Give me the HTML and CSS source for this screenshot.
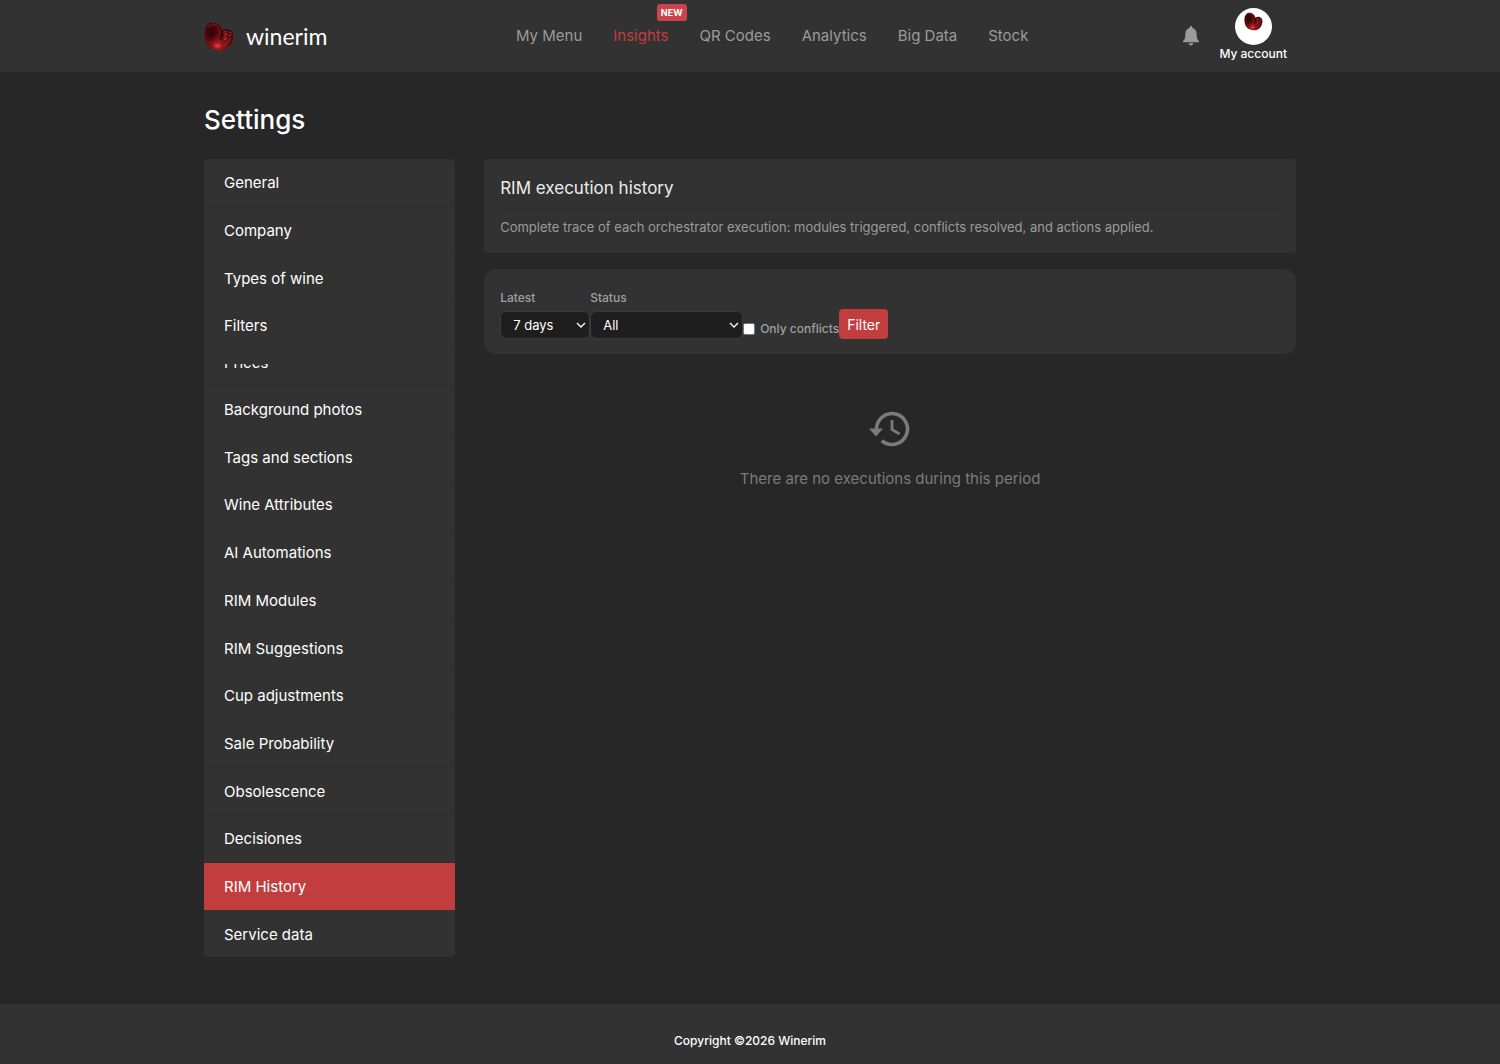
FILE: index.html
```html
<!DOCTYPE html>
<html lang="en">
<head>
    <meta charset="utf-8">
    <meta name="viewport" content="width=device-width, initial-scale=1">
    <title>Winerim - Settings</title>
    <link rel="stylesheet" href="styles.css">
</head>
<body>

<!-- shared drawings -->
<svg class="defs" aria-hidden="true">
    <defs>
        <radialGradient id="shine" cx="46%" cy="82%" r="70%">
            <stop offset="0" stop-color="#c0282c"/>
            <stop offset="0.25" stop-color="#8f1519"/>
            <stop offset="0.6" stop-color="#5e0a0d"/>
            <stop offset="1" stop-color="#420608"/>
        </radialGradient>
        <radialGradient id="lobe" cx="50%" cy="50%" r="50%">
            <stop offset="0" stop-color="#1f0203" stop-opacity=".8"/>
            <stop offset="1" stop-color="#1f0203" stop-opacity="0"/>
        </radialGradient>
    </defs>
    <symbol id="bean" viewBox="0 0 30 29">
        <path d="M8 .5C13 .3 17 4 18 8.500c1.500-1.500 4-2 6.500-1.300 3.500 1 5 3.800 4.600 7.300C28.500 23 23.500 28.500 16 28.500 6.500 28.500 1 22.500.7 13.500.5 6 3 .8 8 .5z" fill="url(#shine)"/>
        <ellipse cx="8" cy="12" rx="7" ry="9" fill="url(#lobe)"/>
        <path d="M3.500 5C6 2 10.500 1.500 13.500 4.500c2 2.500 2.500 6 2 10" fill="none" stroke="#8e1418" stroke-width="1.800" opacity=".6"/>
        <path d="M18 9c.3 3.500-.2 6-1.500 8.500" fill="none" stroke="#250305" stroke-width="1.500"/>
        <path d="M19.500 10.500l3.500-1.500M25 10l2.500 1M20 15l2.500-1.500M24.500 14l3-1.500" fill="none" stroke="#a82a31" stroke-width="1.100"/>
        <path d="M20.500 12.500l3-1.200M20 17.500l3.500-1.500" fill="none" stroke="#d5505a" stroke-width=".9"/>
        <path d="M10 23.500c1-2 5.500-2 7 0-.5 3-5.500 3.300-7 0z" fill="#dd3c3e" opacity=".7"/>
        <path d="M20 24c3-2 5-5 6-8" fill="none" stroke="#a32226" stroke-width="1.400" opacity=".7"/>
    </symbol>
</svg>

<header class="header">
    <div class="container header-inner">
        <a class="logo" href="#">
            <svg class="logo-mark" aria-hidden="true"><use href="#bean"/></svg>
            <span class="logo-text">winerim</span>
        </a>
        <nav class="nav" aria-label="Main">
            <a href="#">My Menu</a>
            <a href="#" class="current">Insights<span class="badge">NEW</span></a>
            <a href="#">QR Codes</a>
            <a href="#">Analytics</a>
            <a href="#">Big Data</a>
            <a href="#">Stock</a>
        </nav>
        <div class="user">
            <button class="bell" type="button" aria-label="Notifications">
                <svg viewBox="0 0 16 20" width="16" height="20" aria-hidden="true">
                    <path d="M8 0c.8 0 1.400.6 1.400 1.300v.8c2.700.6 4.200 2.900 4.200 5.800 0 4 .7 5.600 2.400 7.100v1.200H0V15c1.700-1.500 2.400-3.100 2.400-7.100 0-2.900 1.500-5.200 4.200-5.800v-.8C6.600.6 7.200 0 8 0zM5.700 17.300h4.600C10.200 18.600 9.200 19.500 8 19.500s-2.200-.9-2.300-2.200z"/>
                </svg>
            </button>
            <a class="account" href="#">
                <span class="avatar"><svg aria-hidden="true"><use href="#bean"/></svg></span>
                <span>My account</span>
            </a>
        </div>
    </div>
</header>

<main class="container main">
    <h1>Settings</h1>
    <div class="columns">
        <nav class="side" aria-label="Settings">
            <a href="#">General</a>
            <a href="#">Company</a>
            <a href="#">Types of wine</a>
            <a href="#">Filters</a>
            <a href="#" class="collapsed"><span>Prices</span></a>
            <a href="#">Background photos</a>
            <a href="#">Tags and sections</a>
            <a href="#">Wine Attributes</a>
            <a href="#">AI Automations</a>
            <a href="#">RIM Modules</a>
            <a href="#">RIM Suggestions</a>
            <a href="#">Cup adjustments</a>
            <a href="#">Sale Probability</a>
            <a href="#">Obsolescence</a>
            <a href="#">Decisiones</a>
            <a href="#" class="active">RIM History</a>
            <a href="#">Service data</a>
        </nav>

        <section class="content">
            <div class="card">
                <h2>RIM execution history</h2>
                <p>Complete trace of each orchestrator execution: modules triggered, conflicts resolved, and actions applied.</p>
            </div>

            <form class="filters">
                <div class="field field-days">
                    <label for="days">Latest</label>
                    <div class="select">
                        <select id="days">
                            <option>7 days</option>
                        </select>
                        <svg viewBox="0 0 10 6" aria-hidden="true"><path d="M1 1l4 4 4-4"/></svg>
                    </div>
                </div>
                <div class="field field-status">
                    <label for="status">Status</label>
                    <div class="select">
                        <select id="status">
                            <option>All</option>
                        </select>
                        <svg viewBox="0 0 10 6" aria-hidden="true"><path d="M1 1l4 4 4-4"/></svg>
                    </div>
                </div>
                <label class="check"><input type="checkbox">Only conflicts</label>
                <button class="btn" type="button">Filter</button>
            </form>

            <div class="empty">
                <svg viewBox="0 0 42 36" width="42" height="36" aria-hidden="true">
                    <path class="ring" d="M7.500 18A15.500 15.500 0 1 1 12.800 29.700"/>
                    <path class="head" d="M0 17.500h14l-7 8z"/>
                    <path class="hand" d="M23 9v9.500l7.500 4.500"/>
                </svg>
                <p>There are no executions during this period</p>
            </div>
        </section>
    </div>
</main>

<footer class="footer">Copyright ©2026 Winerim</footer>

</body>
</html>
```
FILE: styles.css
```css
* {
    box-sizing: border-box;
}

body {
    margin: 0;
    min-height: 100vh;
    display: flex;
    flex-direction: column;
    background: #272727;
    color: #fff;
    font-family: Inter, "Liberation Sans", sans-serif;
    font-size: 15px;
    line-height: 24px;
}

a {
    color: inherit;
    text-decoration: none;
}

h1, h2, p {
    margin: 0;
}

.defs {
    position: absolute;
    width: 0;
    height: 0;
}

.container {
    width: 100%;
    max-width: 1124px;
    margin: 0 auto;
    padding: 0 16px;
}

/* header */
.header {
    background: #323232;
}

.header-inner {
    display: flex;
    align-items: center;
    height: 72px;
}

.logo {
    display: flex;
    align-items: center;
    gap: 12px;
    width: 312px;
}

.logo-mark {
    width: 30px;
    height: 29px;
}

.logo-text {
    font-family: Lato, sans-serif;
    font-size: 23px;
}

.nav {
    display: flex;
    gap: 31px;
    color: #9b9b9b;
    white-space: nowrap;
}

.nav a {
    position: relative;
}

.nav .current {
    color: #c43d3d;
}

.badge {
    position: absolute;
    right: -18px;
    top: -20px;
    padding: 0 4px;
    border-radius: 3px;
    background: #cc444b;
    color: #fff;
    font-size: 9px;
    font-weight: 700;
    line-height: 17px;
}

.user {
    display: flex;
    align-items: center;
    gap: 20px;
    margin-left: auto;
    padding-right: 9px;
}

.bell {
    display: flex;
    padding: 0;
    border: 0;
    background: none;
    fill: #9b9b9b;
}

.account {
    display: flex;
    flex-direction: column;
    align-items: center;
    padding-bottom: 2px;
    font-size: 12px;
    font-weight: 500;
    line-height: 18px;
}

.avatar {
    display: flex;
    justify-content: center;
    width: 37px;
    height: 37px;
    padding-top: 4px;
    border-radius: 50%;
    background: #fff;
}

.avatar svg {
    width: 19px;
    height: 19px;
}

/* page */
.main {
    flex: 1;
    display: flex;
    flex-direction: column;
    padding-top: 30px;
    padding-bottom: 47px;
}

h1 {
    margin-bottom: 21px;
    font-size: 26px;
    font-weight: 500;
    line-height: 36px;
}

.columns {
    flex: 1;
    display: flex;
    gap: 29px;
}

.side {
    display: flex;
    flex-direction: column;
    flex: 0 0 23%;
    border-radius: 4px;
    background: #323232;
    overflow: hidden;
}

.side a {
    flex: 1;
    display: flex;
    align-items: center;
    padding: 11px 20px 9px;
    border-bottom: 1px solid #2e2e2e;
}

.side a:last-child {
    border-bottom: 0;
}

.side .active {
    background: #c23e3e;
    border-color: #c23e3e;
}

.side .collapsed {
    flex: 0 0 36px;
}

/* half-closed row, only the bottom of its text is visible */
.side .collapsed span {
    display: flex;
    align-items: flex-end;
    height: 8px;
    line-height: 18px;
    overflow: hidden;
}

.content {
    flex: 1;
    min-width: 0;
}

.card {
    padding: 16px;
    border-radius: 4px;
    background: #323232;
}

.card h2 {
    padding-bottom: 7px;
    border-bottom: 1px solid #2b2b2b;
    color: #ececec;
    font-size: 17px;
    font-weight: 400;
    line-height: 27px;
}

.card p {
    padding-top: 7px;
    color: #9b9b9b;
    font-size: 13px;
    line-height: 20px;
}

.filters {
    display: flex;
    align-items: flex-end;
    margin-top: 16px;
    padding: 20px 16px 15px;
    border-radius: 12px;
    background: #323232;
}

.field label {
    display: block;
    margin-bottom: 4px;
    color: #a0a0a0;
    font-size: 12px;
    font-weight: 500;
    line-height: 18px;
}

.field-days {
    width: 90px;
}

.field-status {
    width: 153px;
}

.select {
    position: relative;
}

.select select {
    appearance: none;
    display: block;
    width: 100%;
    height: 28px;
    padding: 0 12px;
    border: 1px solid #3b3b3b;
    border-radius: 6px;
    background: #1e1e1e;
    color: #fff;
    font-family: inherit;
    font-size: 13px;
}

.select svg {
    position: absolute;
    right: 4px;
    top: 11px;
    width: 10px;
    height: 6px;
    fill: none;
    stroke: #fff;
    stroke-width: 1.3;
    pointer-events: none;
}

.check {
    display: flex;
    align-items: center;
    gap: 5px;
    color: #a0a0a0;
    font-size: 12px;
    font-weight: 500;
    line-height: 20px;
}

.check input {
    appearance: none;
    width: 12px;
    height: 12px;
    margin: 0;
    border: 1px solid #767676;
    border-radius: 2px;
    background: #fff;
}

.check input:checked {
    background: #c23e3e;
}

.btn {
    height: 30px;
    padding: 0 8px;
    border: 0;
    border-radius: 4px;
    background: #c23e3e;
    color: #fff;
    font-family: inherit;
    font-size: 14px;
}

.empty {
    display: flex;
    flex-direction: column;
    align-items: center;
    gap: 20px;
    padding-top: 57px;
    color: #7b7b7b;
    text-align: center;
}

.empty svg {
    fill: none;
    stroke: #7b7b7b;
    stroke-width: 3.6;
}

.empty .head {
    fill: #7b7b7b;
    stroke: none;
}

.empty .hand {
    stroke-width: 2.8;
}

.footer {
    padding: 25px 16px 11px;
    background: #323232;
    font-size: 12px;
    font-weight: 500;
    text-align: center;
}
```
